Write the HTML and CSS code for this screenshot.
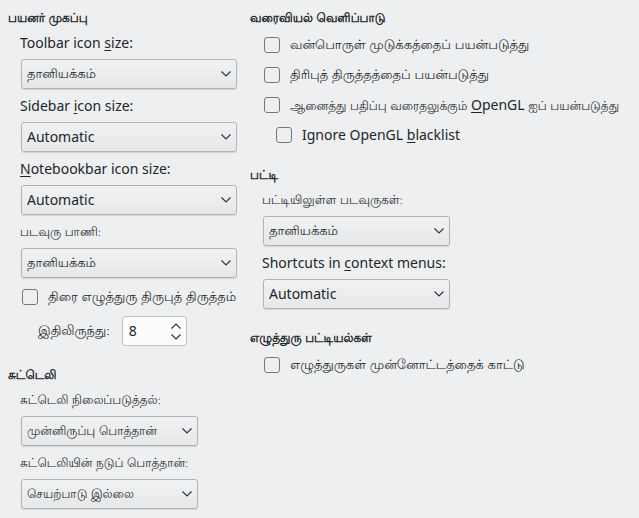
FILE: index.html
```html
<!DOCTYPE html>
<html lang="ta">
<head>
<meta charset="utf-8">
<meta name="viewport" content="width=device-width, initial-scale=1">
<title>பயனர் முகப்பு</title>
<link rel="stylesheet" href="styles.css">
</head>
<body>
<form class="page">
  <div class="column">
    <section class="group">
      <h2>பயனர் முகப்பு</h2>
      <div class="fields">
        <div class="field">
          <label for="toolbar" lang="en">Toolbar icon <u>s</u>ize:</label>
          <div class="combo"><select id="toolbar"><option>தானியக்கம்</option></select><svg viewBox="0 0 10 6"><path d="M.5.5 5 5 9.5.5"/></svg></div>
        </div>
        <div class="field">
          <label for="sidebar" lang="en">Sidebar <u>i</u>con size:</label>
          <div class="combo"><select id="sidebar" lang="en"><option>Automatic</option></select><svg viewBox="0 0 10 6"><path d="M.5.5 5 5 9.5.5"/></svg></div>
        </div>
        <div class="field">
          <label for="notebookbar" lang="en"><u>N</u>otebookbar icon size:</label>
          <div class="combo"><select id="notebookbar" lang="en"><option>Automatic</option></select><svg viewBox="0 0 10 6"><path d="M.5.5 5 5 9.5.5"/></svg></div>
        </div>
        <div class="field">
          <label for="style">படவுரு பாணி:</label>
          <div class="combo"><select id="style"><option>தானியக்கம்</option></select><svg viewBox="0 0 10 6"><path d="M.5.5 5 5 9.5.5"/></svg></div>
        </div>
      </div>
      <div class="checks after-fields">
        <label class="check"><input type="checkbox"><span>திரை எழுத்துரு திருபுத் திருத்தம்</span></label>
        <div class="spin-row">
          <label for="from">இதிலிருந்து:</label>
          <div class="spin">
            <input id="from" type="number" value="8" lang="en">
            <svg viewBox="0 0 10 17"><path d="M.5 5.5 5 1l4.500 4.500M.5 11.500 5 16l4.500-4.500"/></svg>
          </div>
        </div>
      </div>
    </section>
    <section class="group">
      <h2>சுட்டெலி</h2>
      <div class="fields mouse">
        <div class="field">
          <label for="position">சுட்டெலி நிலைப்படுத்தல்:</label>
          <div class="combo"><select id="position"><option>முன்னிருப்பு பொத்தான்</option></select><svg viewBox="0 0 10 6"><path d="M.5.5 5 5 9.5.5"/></svg></div>
        </div>
        <div class="field">
          <label for="middle">சுட்டெலியின் நடுப் பொத்தான்:</label>
          <div class="combo"><select id="middle"><option>செயற்பாடு இல்லை</option></select><svg viewBox="0 0 10 6"><path d="M.5.5 5 5 9.5.5"/></svg></div>
        </div>
      </div>
    </section>
  </div>
  <div class="column">
    <section class="group">
      <h2>வரைவியல் வெளிப்பாடு</h2>
      <div class="checks">
        <label class="check"><input type="checkbox"><span>வன்பொருள் முடுக்கத்தைப் பயன்படுத்து</span></label>
        <label class="check"><input type="checkbox"><span>திரிபுத் திருத்தத்தைப் பயன்படுத்து</span></label>
        <label class="check long"><input type="checkbox"><span>ஆனைத்து பதிப்பு வரைதலுக்கும் <span lang="en"><u>O</u>penGL</span> ஐப் பயன்படுத்து</span></label>
        <label class="check nested" lang="en"><input type="checkbox"><span>Ignore OpenGL <u>b</u>lacklist</span></label>
      </div>
    </section>
    <section class="group">
      <h2>பட்டி</h2>
      <div class="fields menu">
        <div class="field">
          <label for="menuicons">பட்டியிலுள்ள படவுருகள்:</label>
          <div class="combo"><select id="menuicons"><option>தானியக்கம்</option></select><svg viewBox="0 0 10 6"><path d="M.5.5 5 5 9.5.5"/></svg></div>
        </div>
        <div class="field">
          <label for="shortcuts" lang="en">Shortcuts in <u>c</u>ontext menus:</label>
          <div class="combo"><select id="shortcuts" lang="en"><option>Automatic</option></select><svg viewBox="0 0 10 6"><path d="M.5.5 5 5 9.5.5"/></svg></div>
        </div>
      </div>
    </section>
    <section class="group">
      <h2>எழுத்துரு பட்டியல்கள்</h2>
      <div class="checks">
        <label class="check"><input type="checkbox"><span>எழுத்துருகள் முன்னோட்டத்தைக் காட்டு</span></label>
      </div>
    </section>
  </div>
</form>
</body>
</html>
```
FILE: styles.css
```css
* { box-sizing: border-box; }

body {
  margin: 0;
  background: #eeeff1;
  color: #232629;
  font: 13px/22px "Lohit Tamil", "Noto Sans", sans-serif;
}

.page {
  display: grid;
  grid-template-columns: 229px minmax(0, 1fr);
  gap: 13px;
  padding: 7px 8px;
}

.column {
  display: flex;
  flex-direction: column;
  gap: 18px;
}

h2 {
  height: 22px;
  margin: 0 0 3px;
  font-size: 12px;
  line-height: 24px;
  font-weight: 700;
}

label {
  height: 22px;
  line-height: 24px;
  white-space: nowrap;
}

u {
  text-decoration-thickness: 1px;
  text-underline-offset: 2px;
  text-decoration-skip-ink: none;
}

.fields {
  display: flex;
  flex-direction: column;
  gap: 6px;
  padding-left: 12px;
}

.field {
  display: flex;
  flex-direction: column;
  gap: 5px;
}

.field label,
.mouse select,
.long { font-size: 12px; }

.mouse .combo { width: 178px; }
.menu .combo { width: 188px; }

.combo {
  display: grid;
  align-items: center;
  padding-left: 1px;
}

.combo select,
.combo svg { grid-area: 1 / 1; }

.combo svg {
  justify-self: end;
  width: 10px;
  height: 6px;
  margin-right: 6px;
  pointer-events: none;
}

svg path {
  fill: none;
  stroke: #31363b;
  stroke-width: 1.2;
}

select {
  appearance: none;
  width: 100%;
  height: 30px;
  padding: 1px 24px 0 5px;
  border: 1px solid #b1b3b5;
  border-radius: 3px;
  background: linear-gradient(#f1f2f3, #e6e7e9);
  box-shadow: 0 1px 1px #d2d3d5;
  color: inherit;
  font-family: inherit;
  font-size: 13px;
}

.checks {
  display: flex;
  flex-direction: column;
  gap: 8px;
  padding: 2px 0 0 14px;
}

.after-fields { padding-top: 8px; }

.check {
  display: flex;
  align-items: center;
  gap: 10px;
}

.check > span { padding-top: 2px; }

.nested { padding-left: 12px; }

.check input {
  appearance: none;
  flex: none;
  width: 16px;
  height: 16px;
  margin: 0;
  border: 1px solid #75787b;
  border-radius: 3px;
}

.spin-row {
  display: flex;
  align-items: center;
  gap: 12px;
  padding-left: 16px;
}

.spin {
  display: grid;
  align-items: center;
  width: 65px;
}

.spin input,
.spin svg { grid-area: 1 / 1; }

.spin input {
  appearance: textfield;
  width: 100%;
  height: 30px;
  padding: 0 24px 1px 6px;
  border: 1px solid #bec0c2;
  border-radius: 3px;
  background: #fcfcfc;
  color: inherit;
}

.spin input::-webkit-inner-spin-button { display: none; }

.spin svg {
  justify-self: end;
  width: 10px;
  height: 17px;
  margin-right: 6px;
  pointer-events: none;
}

/* Latin texts use the larger interface font */
[lang="en"],
.field label[lang="en"] {
  font-family: "Noto Sans", sans-serif;
  font-size: 14px;
  line-height: 22px;
}

select[lang="en"] {
  padding-top: 0;
  padding-bottom: 1px;
}

.check[lang="en"] > span { padding-top: 0; }
```
